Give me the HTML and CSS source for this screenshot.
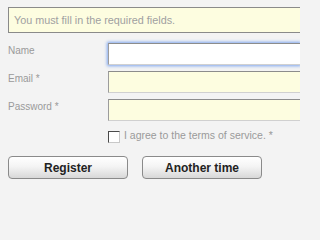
FILE: index.html
```html
<!DOCTYPE html>
<html>
<head>
<meta charset="utf-8">
<link rel="stylesheet" href="styles.css">
</head>
<body>
<div class="form">
  <div class="msg">You must fill in the required fields.</div>
  <div class="rows">
    <div class="row"><span class="label">Name</span><span class="input focus"></span></div>
    <div class="row"><span class="label">Email *</span><span class="input"></span></div>
    <div class="row"><span class="label">Password *</span><span class="input"></span></div>
  </div>
  <div class="agree"><span class="check"></span><span class="agree-text">I agree to the terms of service. *</span></div>
  <div class="buttons">
    <button class="btn">Register</button>
    <button class="btn">Another time</button>
  </div>
</div>
</body>
</html>
```
FILE: styles.css
```css
html, body {
  margin: 0;
  padding: 0;
  background: #f3f3f3;
}
body {
  font-family: "Liberation Sans", Arial, sans-serif;
  font-size: 10px;
}
.form {
  box-sizing: border-box;
  width: 300px;
  height: 200px;
  overflow: hidden;
  padding: 7px 0 0 8px;
  display: flex;
  flex-direction: column;
}
.msg {
  box-sizing: border-box;
  width: 292px;
  height: 26px;
  border: 1px solid #8a8a8a;
  border-right: none;
  background: #fdfde0;
  color: #a0a0a0;
  font-size: 10.8px;
  line-height: 24px;
  padding-left: 5px;
  flex: none;
}
.rows {
  margin-top: 10px;
  display: flex;
  flex-direction: column;
  gap: 6px;
}
.row {
  display: flex;
  align-items: flex-start;
}
.label {
  width: 100px;
  flex: none;
  color: #9a9a9a;
  line-height: 16px;
}
.input {
  box-sizing: border-box;
  width: 192px;
  height: 22px;
  flex: none;
  background: #fdfde0;
  border-style: solid;
  border-width: 1px;
  border-right: none;
  border-color: #8c8c8c #d0d0d0 #d0d0d0 #9c9c9c;
}
.input.focus {
  background: #ffffff;
  box-shadow: 0 0 3px 1px #7ea6ef;
}
.agree {
  margin-top: 10px;
  padding-left: 100px;
  display: flex;
  align-items: center;
  gap: 4px;
}
.check {
  box-sizing: border-box;
  width: 12px;
  height: 12px;
  flex: none;
  background: #fff;
  border-style: solid;
  border-width: 1px;
  border-color: #4a4a4a #c8c8c8 #c8c8c8 #4a4a4a;
}
.agree-text {
  color: #9a9a9a;
  font-size: 10.5px;
  line-height: 12px;
  margin-top: -4px;
}
.buttons {
  margin-top: 13px;
  display: flex;
  gap: 14px;
}
.btn {
  box-sizing: border-box;
  width: 120px;
  height: 23px;
  flex: none;
  margin: 0;
  padding: 0;
  border: 1px solid #8a8a8a;
  border-radius: 4px;
  background: linear-gradient(#ffffff, #f4f4f4 45%, #d8d8d8);
  font-family: "Liberation Sans", Arial, sans-serif;
  font-weight: bold;
  font-size: 12px;
  color: #222;
}
```
